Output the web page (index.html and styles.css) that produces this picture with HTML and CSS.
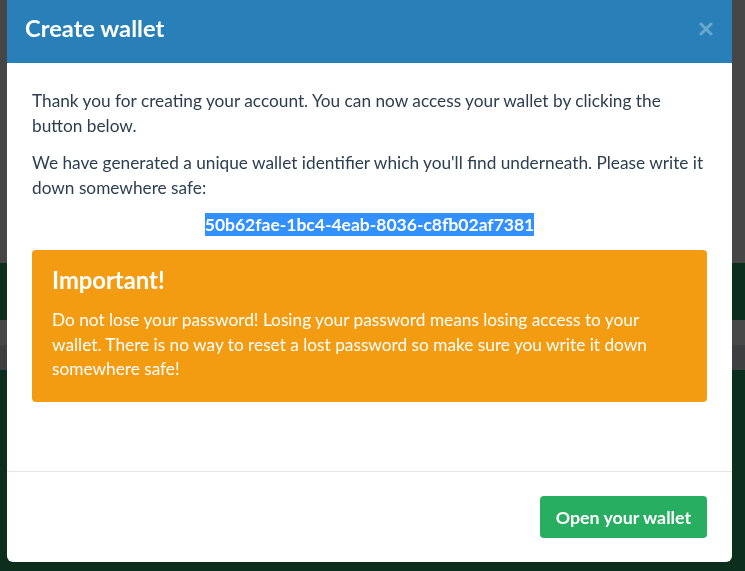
FILE: index.html
```html
<!DOCTYPE html>
<html lang="en">
<head>
<meta charset="utf-8">
<title>Create wallet</title>
<link rel="stylesheet" href="styles.css">
</head>
<body>
<div class="page">
  <div class="band band-gray"></div>
  <div class="band band-green1"></div>
  <div class="band band-gray2"></div>
  <div class="band band-gray3"></div>
  <div class="band band-green2"></div>
</div>
<div class="modal">
  <div class="modal-header">
    <h3 class="modal-title">Create wallet</h3>
    <button class="close" type="button" aria-label="Close">
      <svg width="14" height="14" viewBox="0 0 14 14"><path d="M2 2L12 12M12 2L2 12" stroke="currentColor" stroke-width="3" stroke-linecap="round"/></svg>
    </button>
  </div>
  <div class="modal-body">
    <p>Thank you for creating your account. You can now access your wallet by clicking the button below.</p>
    <p>We have generated a unique wallet identifier which you'll find underneath. Please write it down somewhere safe:</p>
    <p class="wallet-id"><span class="selected">50b62fae-1bc4-4eab-8036-c8fb02af7381</span></p>
    <div class="alert">
      <h4 class="alert-title">Important!</h4>
      <p class="alert-text">Do not lose your password! Losing your password means losing access to your wallet. There is no way to reset a lost password so make sure you write it down somewhere safe!</p>
    </div>
  </div>
  <div class="modal-footer">
    <button class="btn-success" type="button">Open your wallet</button>
  </div>
</div>
</body>
</html>
```
FILE: styles.css
```css
* { box-sizing: border-box; }
html, body {
  margin: 0;
  padding: 0;
  height: 100%;
}
body {
  background: #0c2e1c;
  font-family: Lato, "Open Sans", sans-serif;
  overflow: hidden;
}
.page {
  display: flex;
  flex-direction: column;
}
.band-gray { height: 263px; background: #464646; }
.band-green1 { height: 57px; background: #0c2e1c; }
.band-gray2 { height: 25px; background: #484848; }
.band-gray3 { height: 25px; background: #3e3f41; }
.band-green2 { height: 201px; background: #0c2e1c; }

.modal {
  position: fixed;
  left: 7px;
  top: 0;
  width: 725px;
  background: #fff;
  border-radius: 0 0 6px 6px;
  overflow: hidden;
}
.modal-header {
  height: 63px;
  background: #2980b9;
  display: flex;
  align-items: center;
  justify-content: space-between;
  padding: 0 19px 7px 18px;
}
.modal-title {
  margin: 0;
  color: #fff;
  font-size: 23.7px;
  font-weight: 700;
  line-height: 1.1;
}
.close {
  border: 0;
  background: none;
  padding: 0;
  color: rgba(255, 255, 255, 0.3);
  display: flex;
  margin-top: 2px;
}
.modal-body {
  padding: 25px 25px 69px;
  color: #2c3e50;
  font-size: 17.25px;
  line-height: 25px;
}
.modal-body p {
  margin: 0 0 12px;
}
.modal-body .wallet-id {
  text-align: center;
  font-size: 17.5px;
  font-weight: 700;
  margin-bottom: 13px;
}
.selected {
  background: #3390ff;
  color: #fff;
  padding: 1px 0;
}
.alert {
  background: #f39c12;
  color: #fff;
  border-radius: 4px;
  padding: 17px 20px 20px;
}
.alert-title {
  margin: 0 0 15px;
  font-size: 23.8px;
  font-weight: 700;
  line-height: 26px;
}
.modal-body .alert-text {
  margin: 0;
  line-height: 24.7px;
}
.modal-footer {
  border-top: 1px solid #e5e5e5;
  padding: 24px 25px 24px;
  display: flex;
  justify-content: flex-end;
}
.btn-success {
  height: 42px;
  padding: 0 16px;
  border: 0;
  border-radius: 4px;
  background: #27ae60;
  color: #fff;
  font-family: Lato, "Open Sans", sans-serif;
  font-size: 17.8px;
  font-weight: 700;
}
```
